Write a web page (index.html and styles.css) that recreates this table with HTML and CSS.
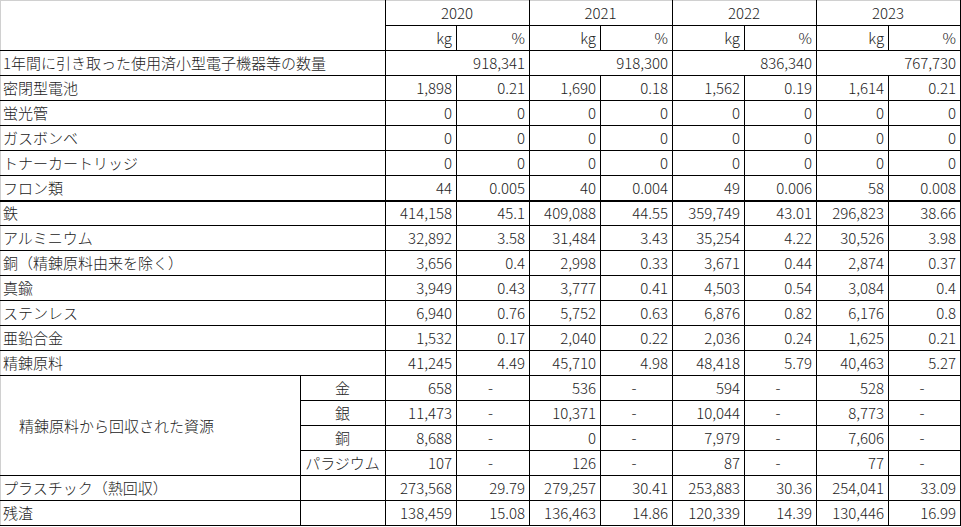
FILE: index.html
```html
<!DOCTYPE html>
<html lang="ja">
<head>
<meta charset="utf-8">
<title>使用済小型電子機器等</title>
<link rel="stylesheet" href="styles.css">
</head>
<body>
<table class="sheet">
  <colgroup>
    <col class="w300"><col class="w85">
    <col class="w71"><col class="w73">
    <col class="w71"><col class="w72">
    <col class="w72"><col class="w72">
    <col class="w72"><col class="w72">
  </colgroup>
  <tbody>
    <tr class="top">
      <td class="corner first" colspan="2" rowspan="2"></td>
      <td class="year" colspan="2">2020</td>
      <td class="year" colspan="2">2021</td>
      <td class="year" colspan="2">2022</td>
      <td class="year" colspan="2">2023</td>
    </tr>
    <tr>
      <td class="num">kg</td><td class="num">%</td>
      <td class="num">kg</td><td class="num">%</td>
      <td class="num">kg</td><td class="num">%</td>
      <td class="num">kg</td><td class="num">%</td>
    </tr>
    <tr>
      <td class="label first" colspan="2">1年間に引き取った使用済小型電子機器等の数量</td>
      <td class="num" colspan="2">918,341</td>
      <td class="num" colspan="2">918,300</td>
      <td class="num" colspan="2">836,340</td>
      <td class="num" colspan="2">767,730</td>
    </tr>
    <tr>
      <td class="label first" colspan="2">密閉型電池</td>
      <td class="num">1,898</td><td class="num">0.21</td>
      <td class="num">1,690</td><td class="num">0.18</td>
      <td class="num">1,562</td><td class="num">0.19</td>
      <td class="num">1,614</td><td class="num">0.21</td>
    </tr>
    <tr>
      <td class="label first" colspan="2">蛍光管</td>
      <td class="num">0</td><td class="num">0</td>
      <td class="num">0</td><td class="num">0</td>
      <td class="num">0</td><td class="num">0</td>
      <td class="num">0</td><td class="num">0</td>
    </tr>
    <tr>
      <td class="label first" colspan="2">ガスボンベ</td>
      <td class="num">0</td><td class="num">0</td>
      <td class="num">0</td><td class="num">0</td>
      <td class="num">0</td><td class="num">0</td>
      <td class="num">0</td><td class="num">0</td>
    </tr>
    <tr>
      <td class="label first" colspan="2">トナーカートリッジ</td>
      <td class="num">0</td><td class="num">0</td>
      <td class="num">0</td><td class="num">0</td>
      <td class="num">0</td><td class="num">0</td>
      <td class="num">0</td><td class="num">0</td>
    </tr>
    <tr class="thick">
      <td class="label first" colspan="2">フロン類</td>
      <td class="num">44</td><td class="num">0.005</td>
      <td class="num">40</td><td class="num">0.004</td>
      <td class="num">49</td><td class="num">0.006</td>
      <td class="num">58</td><td class="num">0.008</td>
    </tr>
    <tr>
      <td class="label first" colspan="2">鉄</td>
      <td class="num">414,158</td><td class="num">45.1</td>
      <td class="num">409,088</td><td class="num">44.55</td>
      <td class="num">359,749</td><td class="num">43.01</td>
      <td class="num">296,823</td><td class="num">38.66</td>
    </tr>
    <tr>
      <td class="label first" colspan="2">アルミニウム</td>
      <td class="num">32,892</td><td class="num">3.58</td>
      <td class="num">31,484</td><td class="num">3.43</td>
      <td class="num">35,254</td><td class="num">4.22</td>
      <td class="num">30,526</td><td class="num">3.98</td>
    </tr>
    <tr>
      <td class="label first" colspan="2">銅（精錬原料由来を除く）</td>
      <td class="num">3,656</td><td class="num">0.4</td>
      <td class="num">2,998</td><td class="num">0.33</td>
      <td class="num">3,671</td><td class="num">0.44</td>
      <td class="num">2,874</td><td class="num">0.37</td>
    </tr>
    <tr>
      <td class="label first" colspan="2">真鍮</td>
      <td class="num">3,949</td><td class="num">0.43</td>
      <td class="num">3,777</td><td class="num">0.41</td>
      <td class="num">4,503</td><td class="num">0.54</td>
      <td class="num">3,084</td><td class="num">0.4</td>
    </tr>
    <tr>
      <td class="label first" colspan="2">ステンレス</td>
      <td class="num">6,940</td><td class="num">0.76</td>
      <td class="num">5,752</td><td class="num">0.63</td>
      <td class="num">6,876</td><td class="num">0.82</td>
      <td class="num">6,176</td><td class="num">0.8</td>
    </tr>
    <tr>
      <td class="label first" colspan="2">亜鉛合金</td>
      <td class="num">1,532</td><td class="num">0.17</td>
      <td class="num">2,040</td><td class="num">0.22</td>
      <td class="num">2,036</td><td class="num">0.24</td>
      <td class="num">1,625</td><td class="num">0.21</td>
    </tr>
    <tr>
      <td class="label first" colspan="2">精錬原料</td>
      <td class="num">41,245</td><td class="num">4.49</td>
      <td class="num">45,710</td><td class="num">4.98</td>
      <td class="num">48,418</td><td class="num">5.79</td>
      <td class="num">40,463</td><td class="num">5.27</td>
    </tr>
    <tr>
      <td class="group first" rowspan="4">精錬原料から回収された資源</td>
      <td class="sub">金</td>
      <td class="num">658</td><td class="dash">-</td>
      <td class="num">536</td><td class="dash">-</td>
      <td class="num">594</td><td class="dash">-</td>
      <td class="num">528</td><td class="dash">-</td>
    </tr>
    <tr>
      <td class="sub">銀</td>
      <td class="num">11,473</td><td class="dash">-</td>
      <td class="num">10,371</td><td class="dash">-</td>
      <td class="num">10,044</td><td class="dash">-</td>
      <td class="num">8,773</td><td class="dash">-</td>
    </tr>
    <tr>
      <td class="sub">銅</td>
      <td class="num">8,688</td><td class="dash">-</td>
      <td class="num">0</td><td class="dash">-</td>
      <td class="num">7,979</td><td class="dash">-</td>
      <td class="num">7,606</td><td class="dash">-</td>
    </tr>
    <tr>
      <td class="sub">パラジウム</td>
      <td class="num">107</td><td class="dash">-</td>
      <td class="num">126</td><td class="dash">-</td>
      <td class="num">87</td><td class="dash">-</td>
      <td class="num">77</td><td class="dash">-</td>
    </tr>
    <tr>
      <td class="label first">プラスチック（熱回収）</td>
      <td class="sub"></td>
      <td class="num">273,568</td><td class="num">29.79</td>
      <td class="num">279,257</td><td class="num">30.41</td>
      <td class="num">253,883</td><td class="num">30.36</td>
      <td class="num">254,041</td><td class="num">33.09</td>
    </tr>
    <tr>
      <td class="label first">残渣</td>
      <td class="sub"></td>
      <td class="num">138,459</td><td class="num">15.08</td>
      <td class="num">136,463</td><td class="num">14.86</td>
      <td class="num">120,339</td><td class="num">14.39</td>
      <td class="num">130,446</td><td class="num">16.99</td>
    </tr>
  </tbody>
</table>
</body>
</html>
```

FILE: styles.css
```css
html, body {
  margin: 0;
  padding: 0;
  background: #ffffff;
}

.sheet {
  border-collapse: collapse;
  table-layout: fixed;
  width: 961px;
  font-family: "Noto Sans CJK JP", "Noto Sans", sans-serif;
  font-size: 15px;
  font-weight: 300;
  color: #222222;
}

.w300 { width: 300px; }
.w85 { width: 85px; }
.w71 { width: 71px; }
.w72 { width: 72px; }
.w73 { width: 73px; }

.sheet tr {
  height: 25px;
}

.sheet td {
  border: 1px solid #000;
  padding: 0 4px 0 3px;
  line-height: 22px;
  white-space: nowrap;
  overflow: hidden;
  vertical-align: middle;
}

.sheet .top td {
  border-top: 1px solid #d0d0d0;
}

.sheet td.first {
  border-left: 1px solid #d0d0d0;
  padding-left: 2px;
}

.sheet td.corner {
  border-bottom: 1px solid #000;
}

.sheet .thick td {
  border-bottom: 2px solid #000;
}

.year {
  text-align: center;
}

.num {
  text-align: right;
}

.label {
  text-align: left;
}

.sub {
  text-align: center;
}

.dash {
  text-align: center;
  padding-right: 8px !important;
}

.sheet td.group {
  text-align: left;
  padding-left: 18px;
}
```
